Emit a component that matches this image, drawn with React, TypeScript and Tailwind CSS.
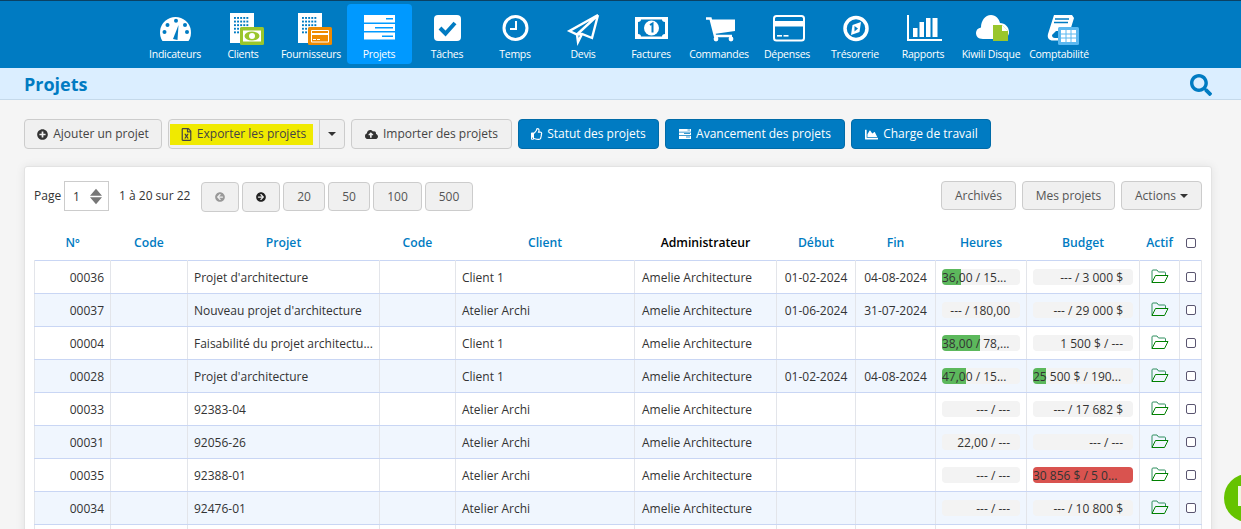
import {
  FaArrowCircleLeft,
  FaArrowCircleRight,
  FaChartArea,
  FaCloudUploadAlt,
  FaPlusCircle,
  FaRegFileExcel,
  FaRegThumbsUp,
  FaSearch,
} from "react-icons/fa";

const blue = "#007bc2";

function Building({ badge }: { badge: string }) {
  const cells = [];
  for (let r = 0; r < 5; r++) {
    for (let c = 0; c < 5; c++) {
      cells.push(<rect key={`${r}-${c}`} x={25 + c * 3.1} y={7 + r * 3.6} width="1.9" height="1.9" fill={blue} />);
    }
  }
  return (
    <>
      <rect x="21" y="3" width="24" height="30" fill="#fff" />
      {cells}
      <rect x="31" y="17" width="24" height="18" rx="1.5" fill={badge} />
    </>
  );
}

const navIcons: React.ReactNode[] = [
  <>
    <path d="M21.5 31A15.5 15.5 0 1 1 47.5 31Z" fill="#fff" />
    {[[23.5, 22], [26.5, 15], [35, 10.7], [44, 15], [46, 22]].map(([x, y]) => (
      <circle key={x} cx={x} cy={y} r="2" fill={blue} />
    ))}
    <path d="M32 29L37.5 15L36.5 30Z" fill={blue} />
  </>,
  <>
    <Building badge="#9ac62c" />
    <rect x="34" y="20.5" width="18" height="11" fill="#fff" />
    <ellipse cx="43" cy="26" rx="7.5" ry="4.5" fill="#9ac62c" />
    <circle cx="43" cy="26" r="3" fill="#fff" />
  </>,
  <>
    <Building badge="#f08a00" />
    <rect x="34" y="20" width="18" height="12.5" rx="1" fill="#fff" />
    <rect x="35" y="21" width="16" height="2" fill="#f08a00" />
    <rect x="35" y="25" width="16" height="6.5" fill="#f08a00" />
    <rect x="36" y="29" width="3" height="1" fill="#fff" />
    <rect x="40" y="29" width="3" height="1" fill="#fff" />
  </>,
  <>
    <rect x="19" y="5" width="31" height="7.5" fill="#fff" />
    <rect x="19" y="14" width="31" height="7" fill="#fff" />
    <rect x="19" y="22.5" width="31" height="7" fill="#fff" />
    <rect x="41" y="8" width="7" height="1.5" fill="#0099ff" />
    <rect x="30" y="17" width="18" height="1.5" fill="#0099ff" />
    <rect x="37" y="25.5" width="11" height="1.5" fill="#0099ff" />
  </>,
  <>
    <rect x="21" y="5" width="27" height="26" rx="4" fill="#fff" />
    <path d="M27 18L32.5 23.5L42 13" fill="none" stroke={blue} strokeWidth="4" />
  </>,
  <>
    <circle cx="34.5" cy="18" r="11.5" fill="none" stroke="#fff" strokeWidth="3" />
    <path d="M35 11V19H29" fill="none" stroke="#fff" strokeWidth="2" />
  </>,
  <path d="M49 5L20.5 21L28 24.5ZM49 5L43 28L33 24L28 24.5L29 32L33 24" fill="none" stroke="#fff" strokeWidth="2.4" strokeLinejoin="miter" />,
  <>
    <rect x="18" y="7" width="33" height="22" fill="#fff" />
    <path d="M21 12C23 12 24 11 24 9.5H45C45 11 46 12 48 12V24C46 24 45 25 45 26.5H24C24 25 23 24 21 24Z" fill={blue} />
    <circle cx="34.5" cy="18" r="7.5" fill="#fff" />
    <path d="M33 15L35.5 13.5V22.5" fill="none" stroke={blue} strokeWidth="2" />
  </>,
  <>
    <path d="M21 8.5H25.5L30 26H47" fill="none" stroke="#fff" strokeWidth="2.5" />
    <path d="M26 9.5H50V21L29 24Z" fill="#fff" />
    <circle cx="31" cy="29" r="2.4" fill="#fff" />
    <circle cx="46" cy="29" r="2.4" fill="#fff" />
  </>,
  <>
    <rect x="21" y="6" width="30" height="24.5" rx="2.5" fill="none" stroke="#fff" strokeWidth="2" />
    <rect x="21" y="11" width="30" height="5.5" fill="#fff" />
    <rect x="24" y="25" width="5" height="1.6" fill="#fff" />
    <rect x="30.5" y="25" width="5" height="1.6" fill="#fff" />
  </>,
  <>
    <circle cx="35" cy="18.5" r="11" fill="none" stroke="#fff" strokeWidth="3.5" />
    <path d="M40 12L38.5 22L30 25L31.5 15Z" fill="#fff" />
    <path d="M33.5 16L37 18.5L33.5 21.5Z" fill={blue} />
  </>,
  <>
    <path d="M19 5V30H53" fill="none" stroke="#fff" strokeWidth="2" />
    <rect x="24" y="18" width="4.5" height="9" fill="#fff" />
    <rect x="30.5" y="12" width="4.5" height="15" fill="#fff" />
    <rect x="37" y="8" width="4.5" height="19" fill="#fff" />
    <rect x="43.5" y="8" width="5" height="19" fill="#fff" />
  </>,
  <>
    <path d="M26 29C21 29 19 26 19 23C19 20 21 18 24 17.5C24 11 28 5 34 5C39 5 42 9 43 13C48 13 52 17 52 22C52 26 49 29 46 29Z" fill="#fff" />
    <path d="M36 15H45L51 21V31H36Z" fill="#9ac62c" />
    <path d="M45 15L51 21H45Z" fill="#fff" />
  </>,
  <>
    <path d="M29 5H47L49 8L45 21H31L27 25C27 27 28 28 30 28H36V30.5H28C24 30.5 22 28 23 24Z" fill="#fff" />
    <path d="M30 9H44M29 12.5H43" stroke={blue} strokeWidth="1.5" />
    <rect x="33" y="17" width="21" height="18" rx="1.5" fill="#5bb8f0" />
    <rect x="36" y="20" width="15" height="12" fill="#fff" />
    <path d="M41 20V32M46 20V32M36 24H51M36 28H51" stroke="#5bb8f0" strokeWidth="1" />
  </>,
];

const navLabels = [
  "Indicateurs",
  "Clients",
  "Fournisseurs",
  "Projets",
  "Tâches",
  "Temps",
  "Devis",
  "Factures",
  "Commandes",
  "Dépenses",
  "Trésorerie",
  "Rapports",
  "Kiwili Disque",
  "Comptabilité",
];

type Bar = { label: string; pct?: number; color?: string };

const rows: {
  no: string;
  name: string;
  client: string;
  start?: string;
  end?: string;
  hours: Bar;
  budget: Bar;
}[] = [
  { no: "00036", name: "Projet d'architecture", client: "Client 1", start: "01-02-2024", end: "04-08-2024", hours: { label: "36,00 / 15...", pct: 24 }, budget: { label: "--- / 3 000 $" } },
  { no: "00037", name: "Nouveau projet d'architecture", client: "Atelier Archi", start: "01-06-2024", end: "31-07-2024", hours: { label: "--- / 180,00" }, budget: { label: "--- / 29 000 $" } },
  { no: "00004", name: "Faisabilité du projet architectu...", client: "Client 1", hours: { label: "38,00 / 78,...", pct: 49 }, budget: { label: "1 500 $ / ---" } },
  { no: "00028", name: "Projet d'architecture", client: "Client 1", start: "01-02-2024", end: "04-08-2024", hours: { label: "47,00 / 15...", pct: 31 }, budget: { label: "25 500 $ / 190...", pct: 13 } },
  { no: "00033", name: "92383-04", client: "Atelier Archi", hours: { label: "--- / ---" }, budget: { label: "--- / 17 682 $" } },
  { no: "00031", name: "92056-26", client: "Atelier Archi", hours: { label: "22,00 / ---" }, budget: { label: "--- / ---" } },
  { no: "00035", name: "92388-01", client: "Atelier Archi", hours: { label: "--- / ---" }, budget: { label: "30 856 $ / 5 0...", pct: 100, color: "bg-[#d9534f]" } },
  { no: "00034", name: "92476-01", client: "Atelier Archi", hours: { label: "--- / ---" }, budget: { label: "--- / 10 800 $" } },
];

const btn = "h-[30px] flex items-center rounded-[4px] border border-[#ccc] bg-[#f0f0f0] text-[#444]";
const blueBtn = "h-[30px] flex items-center justify-center rounded-[4px] border border-[#006ba8] bg-[#007bc2] text-white";
const pageBtn = "h-[29px] flex items-center justify-center rounded-[4px] border border-[#ccc] bg-[#f0f0f0] text-[#555]";

function Caret() {
  return (
    <svg viewBox="0 0 8 4" className="h-[4px] w-[8px]">
      <path d="M0 0H8L4 4Z" fill="#333" />
    </svg>
  );
}

function Progress({ bar, wide }: { bar: Bar; wide?: boolean }) {
  return (
    <div className={`relative mx-auto h-[16px] overflow-hidden rounded-[4px] bg-[#f3f3f3] ${wide ? "w-[100px]" : "w-[78px]"}`}>
      {bar.pct && (
        <div className={`absolute inset-y-0 left-0 ${bar.color ?? "bg-[#5cb85c]"}`} style={{ width: `${bar.pct}%` }} />
      )}
      <div className={`relative leading-[18px] whitespace-nowrap ${bar.pct ? "text-left" : "pr-[10px] text-right"}`}>{bar.label}</div>
    </div>
  );
}

function Check() {
  return <input type="checkbox" className="block mx-auto h-[10px] w-[10px] appearance-none rounded-[2px] border border-[#5a5570] bg-white" />;
}

function Folder() {
  return (
    <svg viewBox="0 0 18 15" className="mx-auto h-[15px] w-[18px]">
      <path d="M1 13.5V2C1 1.4 1.4 1 2 1H6L7.5 3H13.5C14.1 3 14.5 3.4 14.5 4V6.5" fill="none" stroke="#2f8f5f" strokeWidth="1" />
      <path d="M1 13.5H13.5L17 6.5H4.5Z" fill="none" stroke="#008000" strokeWidth="1" strokeLinejoin="round" />
    </svg>
  );
}

const th = "font-semibold text-[12.2px] text-[#007bc2] text-center h-[27px] p-0 pb-[6px]";
const td = "border border-[#e3e5ea] border-y-[#c9d6f4] p-0 h-[33px] px-[6px] whitespace-nowrap overflow-hidden";
const tdText = "pt-[2px]";

export default function App() {
  return (
    <div className="relative h-[529px] overflow-hidden bg-[#f5f5f5] font-['Open_Sans',sans-serif] text-[12px] text-[#333]">
      {/* Top nav */}
      <div className="flex h-[68px] border-t border-[#0a4163] bg-[#007bc2] pl-[141px]">
        {navLabels.map((label, i) => (
          <div key={label} className={`mt-[3px] flex h-[60px] w-[68px] flex-col items-center ${i === 3 ? "relative" : ""}`}>
            {i === 3 && <div className="absolute inset-y-0 left-[2px] w-[65px] rounded-[4px] bg-[#0099ff]" />}
            <svg viewBox="0 0 68 38" className="relative mt-[6px] h-[38px] w-[68px] shrink-0">
              {navIcons[i]}
            </svg>
            <span className="relative -mt-[1px] text-[10.5px] leading-[14px] tracking-[-0.25px] whitespace-nowrap text-white">{label}</span>
          </div>
        ))}
      </div>

      {/* Title bar */}
      <div className="flex h-[32px] items-center justify-between border-b border-[#c5d9ea] bg-[#dbeeff] pr-[29px] pl-[24px]">
        <h1 className="mt-[1px] text-[18px] font-bold text-[#007bc2]">Projets</h1>
        <FaSearch className="mt-[3px] h-[22px] w-[22px] text-[#007bc2]" />
      </div>

      {/* Actions */}
      <div className="mt-[19px] flex gap-[6px] pl-[24px]">
        <button className={`${btn} w-[138px] justify-center gap-[5px]`}>
          <FaPlusCircle className="h-[11px] w-[11px] text-[#333]" />
          Ajouter un projet
        </button>
        <div className={`${btn} w-[177px]`}>
          <div className="ml-[1px] flex h-[21px] w-[143px] items-center justify-center gap-[5px] bg-[#f0ea00] pl-[4px]">
            <FaRegFileExcel className="h-[13px] w-[11px]" />
            Exporter les projets
          </div>
          <div className="ml-[6px] flex h-full flex-1 items-center justify-center border-l border-[#ccc]">
            <Caret />
          </div>
        </div>
        <button className={`${btn} w-[161px] justify-center gap-[5px]`}>
          <FaCloudUploadAlt className="h-[13px] w-[13px] text-[#333]" />
          Importer des projets
        </button>
        <button className={`${blueBtn} w-[141px] gap-[4px]`}>
          <FaRegThumbsUp className="h-[12px] w-[12px]" />
          Statut des projets
        </button>
        <button className={`${blueBtn} w-[180px] gap-[5px]`}>
          <svg viewBox="0 0 12 10" className="h-[10px] w-[12px]">
            <path d="M0 0H12V2.8H0ZM0 3.5H12V6.2H0ZM0 7H12V10H0Z" fill="#fff" />
            <path d="M8.5 1H11M5 4.5H11M7 8H11" stroke={blue} strokeWidth="0.8" />
          </svg>
          Avancement des projets
        </button>
        <button className={`${blueBtn} w-[140px] gap-[4px]`}>
          <FaChartArea className="h-[13px] w-[15px]" />
          Charge de travail
        </button>
      </div>

      {/* Card */}
      <div className="mt-[17px] ml-[24px] h-[400px] w-[1188px] rounded-[3px] border border-[#e3e3e3] bg-white pt-[14px] shadow-[0_0_10px_rgba(0,0,0,0.08)]">
        <div className="flex h-[31px] items-start justify-between pr-[9px] pl-[9px]">
          <div className="flex items-start">
            <span className="mt-[6px] w-[30px]">Page</span>
            <div className="flex h-[30px] w-[45px] items-center justify-between border border-[#ccc] bg-white pr-[6px] pl-[8px]">
              <span className="mt-[2px]">1</span>
              <svg viewBox="0 0 14 18" className="h-[17px] w-[12px]">
                <path d="M7 0L14 8H0ZM7 18L0 10H14Z" fill="#777" />
              </svg>
            </div>
            <span className="mt-[6px] ml-[10px] w-[82px]">1 à 20 sur 22</span>
            <div className="mt-[1px] flex gap-[3px]">
              <div className={`${pageBtn} h-[30px] w-[38px]`}>
                <FaArrowCircleLeft className="h-[10px] w-[10px] text-[#999]" />
              </div>
              <div className={`${pageBtn} h-[30px] w-[38px]`}>
                <FaArrowCircleRight className="h-[10px] w-[10px] text-[#222]" />
              </div>
              <div className={`${pageBtn} w-[42px]`}>20</div>
              <div className={`${pageBtn} w-[42px]`}>50</div>
              <div className={`${pageBtn} w-[49px]`}>100</div>
              <div className={`${pageBtn} w-[48px]`}>500</div>
            </div>
          </div>
          <div className="flex gap-[6px]">
            <div className={`${pageBtn} h-[28px] w-[75px]`}>Archivés</div>
            <div className={`${pageBtn} h-[28px] w-[93px]`}>Mes projets</div>
            <div className={`${pageBtn} w-[81px] gap-[4px]`}>
              Actions
              <Caret />
            </div>
          </div>
        </div>

        <table className="mt-[21px] ml-[9px] w-[1167px] table-fixed border-collapse">
          <colgroup>
            <col className="w-[76px]" />
            <col className="w-[77px]" />
            <col className="w-[192px]" />
            <col className="w-[76px]" />
            <col className="w-[179px]" />
            <col className="w-[142px]" />
            <col className="w-[79px]" />
            <col className="w-[80px]" />
            <col className="w-[91px]" />
            <col className="w-[113px]" />
            <col className="w-[40px]" />
            <col className="w-[22px]" />
          </colgroup>
          <thead>
            <tr>
              <th className={th}>Nº</th>
              <th className={th}>Code</th>
              <th className={th}>Projet</th>
              <th className={th}>Code</th>
              <th className={th}>Client</th>
              <th className="h-[27px] p-0 pb-[6px] text-center text-[12.2px] font-semibold text-black">Administrateur</th>
              <th className={th}>Début</th>
              <th className={th}>Fin</th>
              <th className={th}>Heures</th>
              <th className={th}>Budget</th>
              <th className={th}>Actif</th>
              <th className={th}>
                <Check />
              </th>
            </tr>
          </thead>
          <tbody>
            {rows.map((r, i) => (
              <tr key={r.no} className={i % 2 ? "bg-[#f0f6fe]" : "bg-white"}>
                <td className={`${td} ${tdText} text-right`}>{r.no}</td>
                <td className={td} />
                <td className={`${td} ${tdText}`}>{r.name}</td>
                <td className={td} />
                <td className={`${td} ${tdText}`}>{r.client}</td>
                <td className={`${td} ${tdText}`}>
                  <span className="ml-[1px]">Amelie Architecture</span>
                </td>
                <td className={`${td} ${tdText} text-center`}>{r.start}</td>
                <td className={`${td} ${tdText} text-center`}>{r.end}</td>
                <td className={td}>
                  <Progress bar={r.hours} />
                </td>
                <td className={td}>
                  <Progress bar={r.budget} wide />
                </td>
                <td className={td}>
                  <Folder />
                </td>
                <td className={td}>
                  <Check />
                </td>
              </tr>
            ))}
            <tr className="bg-white">
              {Array.from({ length: 12 }, (_, i) => (
                <td key={i} className={td} />
              ))}
            </tr>
          </tbody>
        </table>
      </div>

      {/* Chat bubble */}
      <div className="absolute top-[474px] left-[1224px] h-[48px] w-[48px] rounded-full bg-[#65c300]">
        <div className="absolute top-[12px] left-[14px] h-[20px] w-[10px] bg-[#eef8e0]" />
      </div>
    </div>
  );
}
